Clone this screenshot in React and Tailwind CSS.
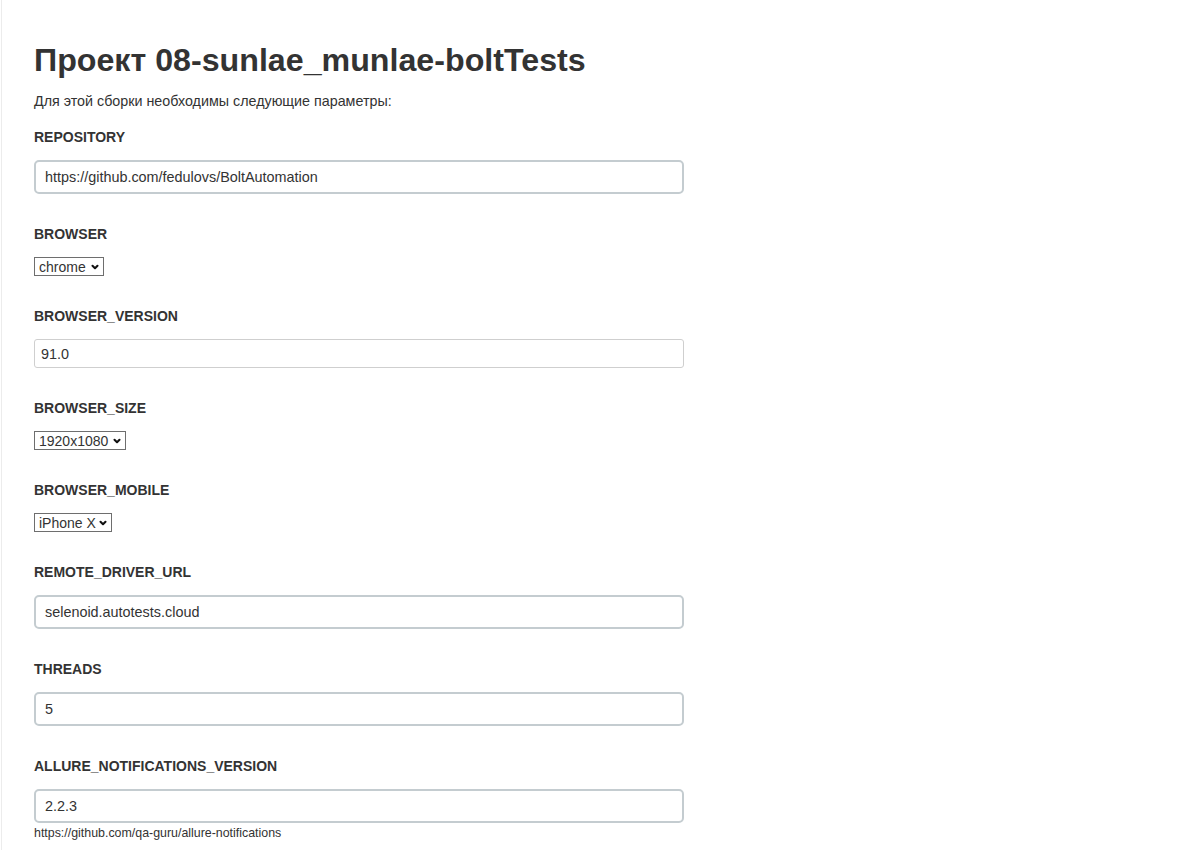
import { ChevronDown } from "lucide-react";

const font = { fontFamily: '"Liberation Sans", Arial, Helvetica, sans-serif' };

function Label({ children }) {
  return (
    <div className="text-[14px] leading-4 font-bold text-[#333] mb-[15px]">
      {children}
    </div>
  );
}

function BigInput({ value }) {
  return (
    <input
      readOnly
      value={value}
      className="block w-[650px] h-[34px] rounded-[5px] border-2 border-[#c4ccd0] bg-white px-[9px] text-[14.4px] text-[#333] outline-none"
      style={font}
    />
  );
}

function SmallInput({ value }) {
  return (
    <input
      readOnly
      value={value}
      className="block w-[650px] h-[29px] rounded-[3px] border border-[#cfcfcf] bg-white px-[6px] text-[14.4px] text-[#333] outline-none"
      style={font}
    />
  );
}

function Select({ value, width }) {
  return (
    <div
      className="relative flex h-[19px] items-center border border-[#6e6e6e] bg-white pl-[4px] text-[14px] leading-none text-[#333]"
      style={{ width }}
    >
      <span>{value}</span>
      <ChevronDown
        className="absolute right-[3px] top-[4px] h-[10px] w-[10px] text-[#111]"
        strokeWidth={5}
      />
    </div>
  );
}

function Field({ label, children, hint }) {
  return (
    <div className="mb-[32px]">
      <Label>{label}</Label>
      {children}
      {hint && (
        <div className="mt-[3px] text-[12.4px] leading-[14px] text-[#333]">{hint}</div>
      )}
    </div>
  );
}

export default function App() {
  return (
    <div className="min-h-[850px] bg-white" style={font}>
      <div className="ml-px min-h-[850px] border-l border-[#ececec] pl-[32px] pt-[38px]">
        <h1 className="text-[32.2px] leading-[44px] font-bold text-[#333]">
          Проект 08-sunlae_munlae-boltTests
        </h1>
        <p className="mt-[11px] mb-[20px] text-[14.3px] leading-4 text-[#333]">
          Для этой сборки необходимы следующие параметры:
        </p>

        <Field label="REPOSITORY">
          <BigInput value="https://github.com/fedulovs/BoltAutomation" />
        </Field>
        <Field label="BROWSER">
          <Select value="chrome" width={70} />
        </Field>
        <Field label="BROWSER_VERSION">
          <SmallInput value="91.0" />
        </Field>
        <Field label="BROWSER_SIZE">
          <Select value="1920x1080" width={92} />
        </Field>
        <Field label="BROWSER_MOBILE">
          <Select value="iPhone X" width={78} />
        </Field>
        <Field label="REMOTE_DRIVER_URL">
          <BigInput value="selenoid.autotests.cloud" />
        </Field>
        <Field label="THREADS">
          <BigInput value="5" />
        </Field>
        <Field
          label="ALLURE_NOTIFICATIONS_VERSION"
          hint="https://github.com/qa-guru/allure-notifications"
        >
          <BigInput value="2.2.3" />
        </Field>
      </div>
    </div>
  );
}
